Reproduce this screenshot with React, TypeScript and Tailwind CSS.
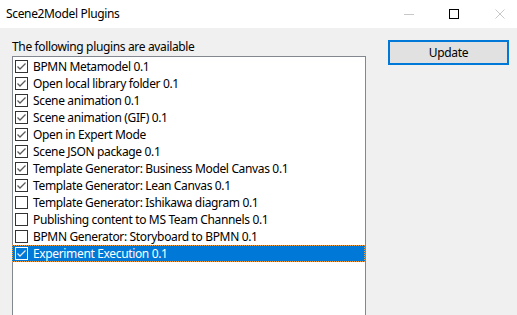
import React from 'react';

const plugins = [
  { name: 'BPMN Metamodel 0.1', checked: true },
  { name: 'Open local library folder 0.1', checked: true },
  { name: 'Scene animation 0.1', checked: true },
  { name: 'Scene animation (GIF) 0.1', checked: true },
  { name: 'Open in Expert Mode', checked: true },
  { name: 'Scene JSON package 0.1', checked: true },
  { name: 'Template Generator: Business Model Canvas 0.1', checked: true },
  { name: 'Template Generator: Lean Canvas 0.1', checked: true },
  { name: 'Template Generator: Ishikawa diagram 0.1', checked: false },
  { name: 'Publishing content to MS Team Channels 0.1', checked: false },
  { name: 'BPMN Generator: Storyboard to BPMN 0.1', checked: false },
  { name: 'Experiment Execution 0.1', checked: true },
];

const CheckBox = ({ checked, selected }: { checked: boolean; selected: boolean }) => (
  <div
    className={`w-[13px] h-[13px] shrink-0 border ${
      selected ? 'border-white bg-[#0078d7]' : 'border-[#333333] bg-white'
    }`}
  >
    {checked && (
      <svg width="11" height="11" viewBox="0 0 11 11">
        <path
          d="M1.5 5.5 L4 8 L9.5 2.5"
          fill="none"
          stroke={selected ? '#e8e8e8' : '#5a5a5a'}
          strokeWidth="1.3"
        />
      </svg>
    )}
  </div>
);

export default function App() {
  const selectedIndex = plugins.length - 1;

  return (
    <div className="w-[517px] h-[315px] overflow-hidden bg-[#f0f0f0] text-[12px] tracking-[-0.35px] text-black font-['Noto_Sans','Open_Sans',sans-serif]">
      {/* title bar */}
      <div className="h-[28px] bg-white flex items-center">
        <span className="pl-[6px] leading-[16px] text-[12px]">Scene2Model Plugins</span>
        <div className="ml-auto flex items-center pr-[12px]">
          <div className="w-[10px] h-px bg-[#c8c8c8]" />
          <div className="ml-[35px] w-[10px] h-[10px] border border-black" />
          <svg className="ml-[36px]" width="10" height="10" viewBox="0 0 10 10">
            <path d="M0.5 0.5 L9.5 9.5 M9.5 0.5 L0.5 9.5" stroke="#c8c8c8" strokeWidth="1" />
          </svg>
        </div>
      </div>

      {/* body */}
      <div className="flex pt-[11px] pl-[12px]">
        <div className="w-[354px] flex flex-col">
          <div className="h-[17px] leading-[16px]">The following plugins are available</div>
          <div className="h-[270px] bg-white border border-[#828790] pt-px">
            {plugins.map((p, i) => {
              const selected = i === selectedIndex;
              return (
                <div
                  key={p.name}
                  className={`h-[17px] flex items-center gap-[5px] pl-[2px] ${
                    selected ? 'bg-[#0078d7] text-white border border-dotted border-[#f0a040] -ml-px pl-[1px]' : ''
                  }`}
                >
                  <CheckBox checked={p.checked} selected={selected} />
                  <span className="leading-[16px] whitespace-nowrap">{p.name}</span>
                </div>
              );
            })}
          </div>
        </div>

        <div className="ml-[22px] pt-[1px]">
          <button className="w-[121px] h-[25px] bg-[#e1e1e1] border-2 border-[#0078d7] leading-[16px] text-[12px]">
            Update
          </button>
        </div>
      </div>
    </div>
  );
}
